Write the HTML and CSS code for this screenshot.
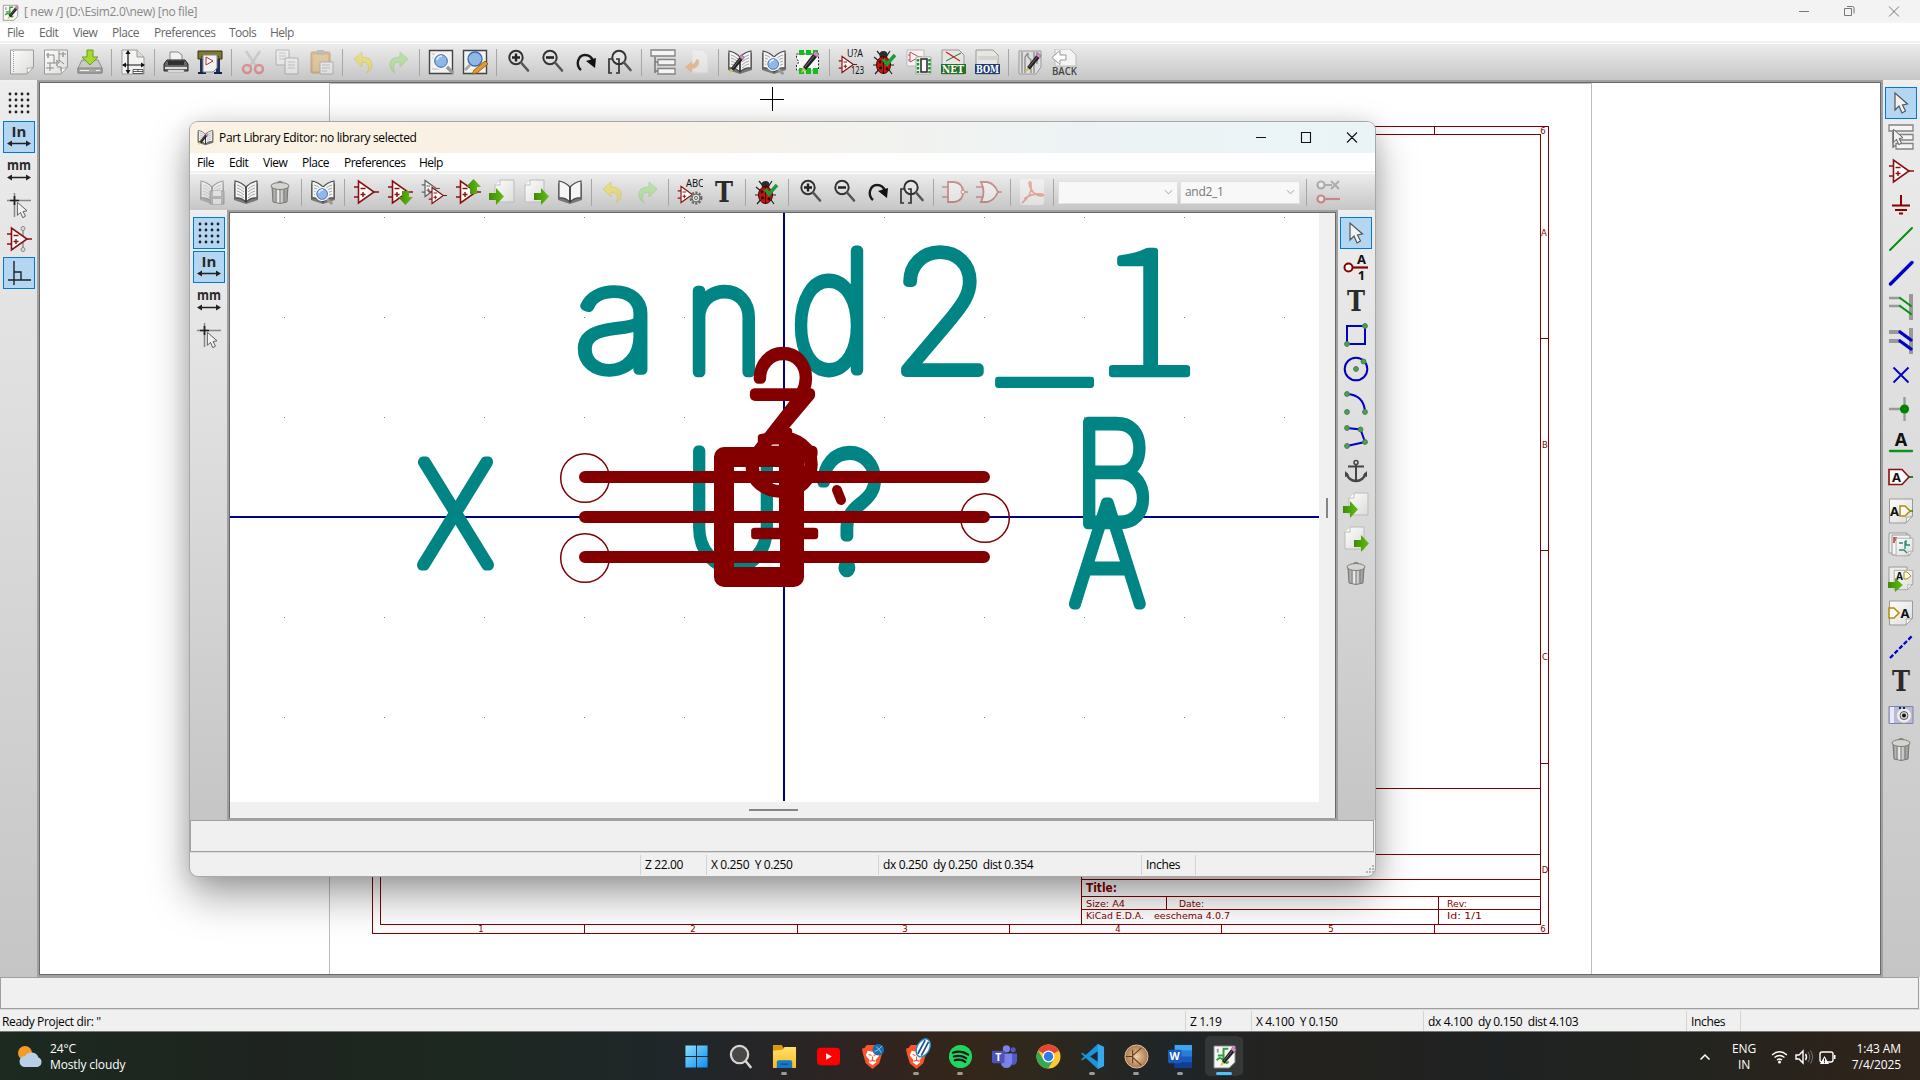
FILE: index.html
```html
<!DOCTYPE html>
<html lang="en">
<head>
<meta charset="utf-8">
<title>[ new /] (D:\Esim2.0\new) [no file]</title>
<link rel="stylesheet" href="styles.css">
</head>
<body>
<svg class="defs" width="0" height="0">
  <defs>
    <linearGradient id="paper" x1="0" y1="0" x2="1" y2="1"><stop offset="0" stop-color="#fdfdfd"/><stop offset="1" stop-color="#dcdcda"/></linearGradient>
    <linearGradient id="metal" x1="0" x2="1"><stop offset="0" stop-color="#8d8d88"/><stop offset=".4" stop-color="#eeeeec"/><stop offset="1" stop-color="#8d8d88"/></linearGradient>
    <linearGradient id="winblue" x1="0" y1="0" x2="1" y2="1"><stop offset="0" stop-color="#8be0fd"/><stop offset="1" stop-color="#0a8ef5"/></linearGradient>
    <linearGradient id="folder" x1="0" y1="0" x2="0" y2="1"><stop offset="0" stop-color="#ffdf71"/><stop offset="1" stop-color="#f9bb1c"/></linearGradient>
    <radialGradient id="bronze"><stop offset="0" stop-color="#f0cfa5"/><stop offset="1" stop-color="#a87850"/></radialGradient>
    <linearGradient id="green" x1="0" x2="1"><stop offset="0" stop-color="#3f8a06"/><stop offset="1" stop-color="#63bf12"/></linearGradient>
  </defs>
</svg>
<svg class="symbols">
  <symbol id="pencil" viewBox="0 0 26 26"><path d="M5 24l2-6 3 3z" fill="#d8c24a"/><path d="M7 18L17 5l4 3-11 13z" fill="#222"/><path d="M9 18L18 7" stroke="#777"/><path d="M17 5l2-3 4 3-2 3z" fill="#d58ac6" stroke="#86507b" stroke-width=".6"/></symbol>
  <symbol id="lens" viewBox="0 0 26 26"><path d="M17 18l6 6" stroke="#999" stroke-width="3.4" stroke-linecap="round"/><circle cx="12" cy="13" r="7.5" fill="#8fb8e6" stroke="#f6f6f6" stroke-width="2"/><circle cx="12" cy="13" r="6.3" fill="none" stroke="#3e6ca8"/><path d="M8 12q1-4 5-4" stroke="#e3f0ff" stroke-width="1.6" fill="none"/></symbol>
  <symbol id="page" viewBox="0 0 26 26"><path d="M1.500 1h23v17l-6.500 7h-16.500z" fill="url(#paper)" stroke="#9a9a98"/><path d="M18 25q1-4 0-6 3 1 6.500-1z" fill="#fff" stroke="#9a9a98" stroke-width=".8"/></symbol>
  <symbol id="new" viewBox="0 0 26 26"><use href="#page"/><path d="M4.500 2v22" stroke="#999" stroke-dasharray="1 1"/></symbol>
  <symbol id="open" viewBox="0 0 26 26"><use href="#page"/><path d="M3 6h8v8H4M11 14h5V5h7M16 5v-3M7 14v8M3 19h8M16 11l5 4M14 18h4v4" fill="none" stroke="#8a8a8a"/><path d="M14 11v6M5 4v5M20 3v5" stroke="#aaa" stroke-width="2"/></symbol>
  <symbol id="save" viewBox="0 0 26 26"><path d="M5 11h16l4 8v5H1v-5z" fill="#c9c9c7" stroke="#8b8b89"/><path d="M1 19h24v5H1z" fill="#a8a8a6" stroke="#80807e"/><path d="M3 21.500h9M19 21.500h4" stroke="#eee"/><path d="M10 1h6v7h5l-8 8-8-8h5z" fill="#a6d932" stroke="#6da010"/></symbol>
  <symbol id="pagesize" viewBox="0 0 26 26"><path d="M2 1h15l7 7v17H2z" fill="#f3f3f2" stroke="#999"/><path d="M17 1v7h7" fill="#ddd" stroke="#999"/><path d="M8 3v21M3 16h21" stroke="#111" stroke-width="1.200"/><path d="M8 1l-2.500 4h5zM8 25l-2.500-4h5zM2 16l4-2.500v5zM25 16l-4-2.500v5z" fill="#111"/><path d="M13 20.500h10v4H13zM13 22.500h10M18 20.500v2" fill="#fff" stroke="#333" stroke-width=".8"/></symbol>
  <symbol id="print" viewBox="0 0 26 26"><path d="M7 12V3h8l4 3v6z" fill="#f2f2f2" stroke="#888"/><path d="M4 11h18l3 4v7H1v-7z" fill="#666" stroke="#222"/><path d="M5 12h16v4H5z" fill="#303030"/><path d="M2 18h22v2H2z" fill="#ddd"/><path d="M5 21h16v2H5z" fill="#f6f6f6" stroke="#999" stroke-width=".6"/></symbol>
  <symbol id="plot" viewBox="0 0 26 26"><path d="M3 10h4v15H3zM19 10h4v15h-4z" fill="#20335f"/><path d="M1 24h8M17 24h8" stroke="#14224a" stroke-width="2"/><path d="M1 2h24v8h-4v-3H5v3H1z" fill="#7d7b31" stroke="#33310e"/><path d="M6 6h14v13l-4 4H6z" fill="#f2f2f2" stroke="#888"/><path d="M9 8v8l7-4z" fill="#fff" stroke="#a33"/></symbol>
  <symbol id="cut" viewBox="0 0 26 26"><path d="M6 2l10 15M20 2L10 17" stroke="#aaa" stroke-width="2.400"/><circle cx="7" cy="20" r="4" fill="none" stroke="#d33" stroke-width="2.500"/><circle cx="19" cy="20" r="4" fill="none" stroke="#d33" stroke-width="2.500"/></symbol>
  <symbol id="copy" viewBox="0 0 26 26"><path d="M2 1h13v15H2z" fill="#fafafa" stroke="#777"/><path d="M5 4h7M5 7h7M5 10h7" stroke="#999"/><path d="M11 9h13v16H11z" fill="#fafafa" stroke="#777"/><path d="M14 13h7M14 16h7M14 19h7" stroke="#999"/></symbol>
  <symbol id="paste" viewBox="0 0 26 26"><rect x="3" y="3" width="19" height="21" rx="1.500" fill="#d08a28" stroke="#8f5a10"/><path d="M5 6h15v16H5z" fill="#e7a94e"/><path d="M9 1h7v5H9z" fill="#888"/><path d="M12 13h13v12H12z" fill="#fafafa" stroke="#777"/><path d="M14 16h8M14 19h8M14 22h5" stroke="#999"/></symbol>
  <symbol id="undo" viewBox="0 0 26 26"><path d="M11 3v5q11 0 10 9-1 5-5 7 3-5 1-8-1-3-6-3v5L3 10z" fill="#f5d90a" stroke="#d5a900" stroke-width=".8"/></symbol>
  <symbol id="redo" viewBox="0 0 26 26"><path d="M15 3v5Q4 8 5 17q1 5 5 7-3-5-1-8 1-3 6-3v5l8-8z" fill="#8be060" stroke="#62b94a" stroke-width=".8"/></symbol>
  <symbol id="find" viewBox="0 0 26 26"><path d="M1.500 1.500h23v23h-23z" fill="#f2f2f2" stroke="#444" stroke-width="1.400"/><path d="M4 5h3M4 9h3M4 20h8" stroke="#bbb"/><use href="#lens" x="1" y="-1"/></symbol>
  <symbol id="replace" viewBox="0 0 26 26"><path d="M1.500 1.500h23v23h-23z" fill="#f2f2f2" stroke="#444" stroke-width="1.400"/><circle cx="13" cy="10" r="7" fill="#8fb8e6" stroke="#3e6ca8" stroke-width="1.300"/><path d="M8 16l-5 5" stroke="#aaa" stroke-width="3"/><path d="M10 25l2-4L23 12l3 3-11 9z" fill="#e29a2c" stroke="#8d5410" stroke-width=".8"/></symbol>
  <symbol id="glass" viewBox="0 0 26 26"><circle cx="11" cy="8.500" r="6.700" fill="#e4e4e4" fill-opacity=".5" stroke="#333" stroke-width="2"/><path d="M16 13.500l7 8" stroke="#555" stroke-width="2.600" stroke-linecap="round"/></symbol>
  <symbol id="zin" viewBox="0 0 26 26"><use href="#glass"/><path d="M7 8.500h8M11 4.500v8" stroke="#222" stroke-width="2.400"/></symbol>
  <symbol id="zout" viewBox="0 0 26 26"><use href="#glass"/><path d="M7 8.500h8" stroke="#222" stroke-width="2.600"/></symbol>
  <symbol id="redraw" viewBox="0 0 26 26"><path d="M8 21C2 16 5 6 12 6q6 0 8 6" fill="none" stroke="#1a1a1a" stroke-width="2.400"/><path d="M13 12l10-3-1 10z" fill="#111"/></symbol>
  <symbol id="zfit" viewBox="0 0 26 26"><circle cx="12" cy="8.500" r="6.700" fill="#ececec" fill-opacity=".5" stroke="#333" stroke-width="2"/><path d="M17 13.500l6.500 7.500" stroke="#555" stroke-width="2.600" stroke-linecap="round"/><path d="M5 10H2v14h3M9 10h3v14H9" fill="none" stroke="#333" stroke-width="1.700"/></symbol>
  <symbol id="tree" viewBox="0 0 26 26"><path d="M5 8v16M5 13h5M5 22h5" stroke="#777" stroke-width="1.500" fill="none"/><path d="M1 1h24v6H1zM8 10.500h17v5.500H8zM8 19.500h17v5.500H8z" fill="#f4f4f4" stroke="#838383" stroke-width="1.300"/></symbol>
  <symbol id="leave" viewBox="0 0 26 26"><path d="M8 1h11l5 5v18H8z" fill="#fafafa" stroke="#ddd"/><path d="M15 11q1 8-7 9v4l-7-6 7-6v3q4-1 4-5z" fill="#f0913c"/></symbol>
  <symbol id="book" viewBox="0 0 26 26"><path d="M1 4v17l12 4 12-4V4l-12 5z" fill="#777"/><path d="M2 2q6 1 11 6v15Q8 18 2 19zM24 2q-6 1-11 6v15q5-5 11-4z" fill="#f5f5f5" stroke="#4b4b4b" stroke-width="1.100"/><path d="M13 8v15" stroke="#333" stroke-width="1.500"/></symbol>
  <symbol id="booklines" viewBox="0 0 26 26"><use href="#book"/><path d="M4 6q4 1 7 4M4 9q4 1 7 4M4 12q4 1 7 4M4 15q4 1 7 4M22 6q-4 1-7 4M22 9q-4 1-7 4M22 12q-4 1-7 4M22 15q-4 1-7 4" fill="none" stroke="#999" stroke-width=".9"/></symbol>
  <symbol id="libedit" viewBox="0 0 26 26"><use href="#booklines"/><use href="#pencil" x="-2" y="4" width="22" height="22"/></symbol>
  <symbol id="libview" viewBox="0 0 26 26"><use href="#booklines"/><use href="#lens" x="2" y="4" width="22" height="22"/></symbol>
  <symbol id="fpedit" viewBox="0 0 26 26"><path d="M1.500 5h22v16h-22v-5q4-3 0-6z" fill="#f8f8f8" stroke="#222" stroke-dasharray="2 1.500"/><path d="M4 1h5v5H4zM11 1h5v5h-5zM18 1h5v5h-5zM4 19h5v6H4zM11 19h5v6h-5zM18 19h5v6h-5z" fill="#0fc01c"/><use href="#pencil" x="1"/></symbol>
  <symbol id="amp" viewBox="0 0 26 26"><path d="M1 8h5M1 18h5M20 13h6" stroke="#8a1010" stroke-width="1.700"/><path d="M5.500 2v22L21 13z" fill="#fff" stroke="#8a1010" stroke-width="1.600"/><path d="M7.500 9.500h5M7.500 15.500h5M10 13v5" stroke="#8a1010" stroke-width="1.400"/></symbol>
  <symbol id="annotate" viewBox="0 0 26 26"><use href="#amp" x="0" y="6" width="19" height="19"/><text class="g" x="9" y="8" font-size="10" textLength="16" lengthAdjust="spacingAndGlyphs">U?A</text><text class="g" x="13" y="25" font-size="10" textLength="13" lengthAdjust="spacingAndGlyphs">123</text></symbol>
  <symbol id="bug" viewBox="0 0 26 26"><path d="M5 2l5 6M18 2l-4 6M2 8l6 5M1 16h7M3 25l6-7M22 16h-5M20 25l-5-7" stroke="#222" stroke-width="1.200"/><circle cx="11.500" cy="6" r="4" fill="#2b2b2b"/><ellipse cx="11.500" cy="16" rx="7" ry="8.500" fill="#c9140c" stroke="#400"/><path d="M11.500 7v18" stroke="#300"/><circle cx="8" cy="13" r="1.400"/><circle cx="8.500" cy="19" r="1.400"/><circle cx="15" cy="20" r="1.400"/><circle cx="15" cy="13" r="1.300"/><path d="M11 10l4 5 8-9" fill="none" stroke="#1f9b36" stroke-width="3.400"/></symbol>
  <symbol id="cvpcb" viewBox="0 0 26 26"><path d="M1 1h17v16H1z" fill="#f4f4f4" stroke="#bbb"/><path d="M4 3v10l9-5z" fill="#fff" stroke="#c44"/><path d="M2 6h2M2 11h2M13 8h3" stroke="#c44"/><path d="M10 8h15v17H10z" fill="#fafafa" stroke="#aaa"/><path d="M15 10h6v13h-6z" fill="none" stroke="#222" stroke-width="1.500"/><path d="M12 10v14M23.500 10v14" stroke="#109a20" stroke-width="2.500" stroke-dasharray="2.500 1.500"/></symbol>
  <symbol id="net" viewBox="0 0 26 26"><path d="M2 1h17l5 5v19H2z" fill="#e5e5e3" stroke="#999"/><path d="M6 12L21 4" stroke="#1a7a2a"/><path d="M6 3l14 9" stroke="#c22" stroke-width="1.300"/><path d="M1 15h25v10H1z" fill="#267026"/><text x="2" y="24" class="serifb" textLength="22" lengthAdjust="spacingAndGlyphs">NET</text></symbol>
  <symbol id="bom" viewBox="0 0 26 26"><path d="M2 1h17l5 5v19H2z" fill="#e5e5e3" stroke="#999"/><path d="M4 7h20v4H4z" fill="#d2d5cc"/><path d="M1 15h25v10H1z" fill="#1f3c77"/><text x="2" y="24" class="serifb" textLength="23" lengthAdjust="spacingAndGlyphs">BOM</text></symbol>
  <symbol id="pcb" viewBox="0 0 26 26"><path d="M2 2h22v16l-5 7H2z" fill="#dedede" stroke="#999"/><path d="M5 3v21M8 8v16M11 4v4l3 3v13M17 3v21M8 8l3-4M20 3v12" fill="none" stroke="#8a8a8a" stroke-width="1.300"/><use href="#pencil" x="4" y="2" width="23" height="23"/></symbol>
  <symbol id="back" viewBox="0 0 26 26"><path d="M4 0h15l6 6v11H4z" fill="#f4f4f4" stroke="#bbb"/><path d="M1 8.500l8-7v4.500h6v5H9v4.500z" fill="#fff" stroke="#999"/><text class="gm" x="1" y="26" font-size="10.500" textLength="25" lengthAdjust="spacingAndGlyphs">BACK</text></symbol>
  <symbol id="grid" viewBox="0 0 26 26"><path d="M4 4h21M4 10h21M4 16h21M4 22h21" stroke="#222" stroke-width="2.800" stroke-linecap="round" stroke-dasharray="0 6"/></symbol>
  <symbol id="inch" viewBox="0 0 26 26"><text class="gb" x="13" y="13" font-size="15" text-anchor="middle">In</text><path d="M4 19.500h18" stroke="#222" stroke-width="1.500"/><path d="M1 19.500l5-3v6zM25 19.500l-5-3v6z" fill="#222"/></symbol>
  <symbol id="mm" viewBox="0 0 26 26"><text class="gb" x="1" y="12" font-size="15" textLength="24" lengthAdjust="spacingAndGlyphs">mm</text><path d="M4 19.500h18" stroke="#222" stroke-width="1.500"/><path d="M1 19.500l5-3v6zM25 19.500l-5-3v6z" fill="#222"/></symbol>
  <symbol id="arrow" viewBox="0 0 26 26"><path d="M7 3v17l4-4 3 7 3.500-2-3-6 5-1z" fill="#f2f2f2" stroke="#555" stroke-width="1.200"/></symbol>
  <symbol id="curs" viewBox="0 0 26 26"><path d="M8.500 1v24M1 8.500h24" stroke="#888" stroke-width="1.500"/><path d="M8.500 4v9M4 8.500h9" stroke="#222" stroke-width="1.700"/><use href="#arrow" x="6" y="8" width="20" height="20"/></symbol>
  <symbol id="hidden" viewBox="0 0 26 26"><path d="M17 3v20" stroke="#888" stroke-width="1.400"/><circle cx="17" cy="2.500" r="2" fill="#ddd" stroke="#888"/><circle cx="17" cy="23.500" r="2" fill="#ddd" stroke="#888"/><use href="#amp"/></symbol>
  <symbol id="ortho" viewBox="0 0 26 26"><path d="M8 1v24M2 20h23M8 12h7v8" fill="none" stroke="#222" stroke-width="1.400"/></symbol>
  <symbol id="treesel" viewBox="0 0 26 26"><use href="#tree"/><use href="#arrow" x="-1" y="3" width="22" height="20"/></symbol>
  <symbol id="gnd" viewBox="0 0 26 26"><path d="M13 3v10M4 13.500h18M7 18h12M11 21.500h4" stroke="#800" stroke-width="2"/></symbol>
  <symbol id="wire" viewBox="0 0 26 26"><path d="M2 24L24 2" stroke="#00900c" stroke-width="2" stroke-linecap="round"/></symbol>
  <symbol id="bus" viewBox="0 0 26 26"><path d="M2.500 24L24 2.500" stroke="#0000c8" stroke-width="3.400" stroke-linecap="round"/></symbol>
  <symbol id="w2b" viewBox="0 0 26 26"><path d="M23 0v26" stroke="#999" stroke-width="4"/><path d="M1 4h12M1 12h12" stroke="#999" stroke-width="2.400"/><path d="M12 4l11 8M12 12l11 8" stroke="#00900c" stroke-width="2" stroke-linecap="round"/></symbol>
  <symbol id="b2b" viewBox="0 0 26 26"><path d="M23 0v26" stroke="#999" stroke-width="4"/><path d="M1 4h12M1 13h12" stroke="#999" stroke-width="4"/><path d="M12 4l11 8M12 13l11 8" stroke="#0000c8" stroke-width="3.400" stroke-linecap="round"/></symbol>
  <symbol id="nc" viewBox="0 0 26 26"><path d="M5.500 5.500l15 15M20.500 5.500l-15 15" stroke="#0000c8" stroke-width="1.800"/></symbol>
  <symbol id="junction" viewBox="0 0 26 26"><path d="M1 13h15M16.500 1v24" stroke="#999" stroke-width="2.300"/><circle cx="16.500" cy="13" r="4.600" fill="#008400"/></symbol>
  <symbol id="label" viewBox="0 0 26 26"><text class="g" x="13" y="15.500" font-size="18" text-anchor="middle">A</text><path d="M2 21h22" stroke="#0f9318" stroke-width="2.300" stroke-linecap="round"/></symbol>
  <symbol id="glabel" viewBox="0 0 26 26"><path d="M20 13h5" stroke="#0f9318" stroke-width="2"/><path d="M1 5.500h13l7 7.500-7 7.500H1z" fill="#fff" stroke="#8a1010" stroke-width="1.600"/><text class="g" x="8.500" y="18" font-size="13" text-anchor="middle">A</text></symbol>
  <symbol id="hlabel" viewBox="0 0 26 26"><use href="#page"/><path d="M21 13h4" stroke="#0f9318" stroke-width="1.500"/><path d="M12 8h5l5 5-5 5h-5z" fill="#fff" stroke="#b58a00" stroke-width="1.500"/><text class="g" x="6.500" y="18" font-size="13" text-anchor="middle">A</text></symbol>
  <symbol id="sheet" viewBox="0 0 26 26"><path d="M1 1h18v20H1z" fill="#eee" stroke="#999"/><path d="M4 3h18v20H4z" fill="#f4f4f4" stroke="#999"/><path d="M6 5v6M8 5v4" stroke="#b33" stroke-width="1.500"/><use href="#page" x="7" y="5" width="19" height="20"/><path d="M11 11h4M18 8v5l4 0M11 18h5l3 3M17 9v8" stroke="#2a8a7a" fill="none" stroke-width="1.300"/></symbol>
  <symbol id="imp" viewBox="0 0 26 26"><path d="M1 1h18v20H1z" fill="#eee" stroke="#999"/><use href="#page" x="5" y="3" width="21" height="22"/><text class="g" x="8" y="14" font-size="10">A</text><path d="M16 6h3l4 4-4 3h-3z" fill="#fff" stroke="#b58a00"/><path d="M0 16h7v-4l8 7-8 7v-4H0z" fill="url(#green)"/></symbol>
  <symbol id="spin" viewBox="0 0 26 26"><use href="#page"/><path d="M1 8h5l5 5-5 5H1z" fill="#fff" stroke="#b58a00" stroke-width="1.500"/><text class="g" x="17" y="18" font-size="13" text-anchor="middle">A</text></symbol>
  <symbol id="dash" viewBox="0 0 26 26"><path d="M2 24L24 2" stroke="#0000d8" stroke-width="2.300" stroke-dasharray="4.500 2"/></symbol>
  <symbol id="tee" viewBox="0 0 26 26"><text x="4" y="22.500" class="tee" textLength="18" lengthAdjust="spacingAndGlyphs">T</text></symbol>
  <symbol id="cam" viewBox="0 0 26 26"><path d="M1 4.500h24v17H1z" fill="#b7b9dd" stroke="#7f82ab"/><path d="M2 5h4v16H2z" fill="#e9eaf8"/><circle cx="16" cy="13.500" r="7.500" fill="#eee" stroke="#bbb"/><circle cx="16" cy="13.500" r="4" fill="#ddd" stroke="#555"/><circle cx="16" cy="13.500" r="2" fill="#111"/><path d="M11 6h2M15 6h2" stroke="#035" stroke-width="2"/></symbol>
  <symbol id="trash" viewBox="0 0 26 26"><path d="M5 8h16l-1 15q-7 3-14 0z" fill="url(#metal)" stroke="#777"/><path d="M9 9v14M13 9v15M17 9v14" stroke="#666" stroke-width=".9"/><ellipse cx="13" cy="7" rx="9" ry="3.500" fill="#d5d5d0" stroke="#7c7c78"/><path d="M10 4q3-3 6 0" fill="none" stroke="#888" stroke-width="1.500"/></symbol>
  <symbol id="pin" viewBox="0 0 26 26"><path d="M9 13.500h16" stroke="#800" stroke-width="2.200"/><circle cx="5.500" cy="13.500" r="4" fill="#fff" stroke="#800" stroke-width="2"/><text class="g" x="18.500" y="10" font-size="13" text-anchor="middle">A</text><text class="g" x="18.500" y="25.500" font-size="13" text-anchor="middle">1</text></symbol>
  <symbol id="rect" viewBox="0 0 26 26"><path d="M4 4h18v18H4z" fill="none" stroke="#0000c8" stroke-width="2"/><g fill="#2bb73a" stroke="#666"><circle cx="22" cy="4" r="2.400"/><circle cx="4" cy="22" r="2.400"/></g></symbol>
  <symbol id="circ" viewBox="0 0 26 26"><circle cx="13" cy="13" r="11.300" fill="none" stroke="#0000b8" stroke-width="2"/><g fill="#2bb73a" stroke="#666"><circle cx="13" cy="13" r="2.400"/><circle cx="20.500" cy="5.500" r="2.400"/></g></symbol>
  <symbol id="arc" viewBox="0 0 26 26"><path d="M4 4q17 1 18 18" fill="none" stroke="#0000c8" stroke-width="2"/><g fill="#2bb73a" stroke="#666"><circle cx="4" cy="4" r="2.400"/><circle cx="22" cy="22" r="2.400"/><circle cx="4" cy="22" r="2.400"/></g></symbol>
  <symbol id="poly" viewBox="0 0 26 26"><path d="M4 4l13.500 1.500L22 18 4 22" fill="none" stroke="#0000c8" stroke-width="2"/><g fill="#2bb73a" stroke="#666"><circle cx="4" cy="4" r="2.400"/><circle cx="17.500" cy="5.500" r="2.400"/><circle cx="22" cy="18" r="2.400"/><circle cx="4" cy="22" r="2.400"/></g></symbol>
  <symbol id="anchor" viewBox="0 0 26 26"><circle cx="13" cy="4.500" r="2" fill="none" stroke="#444" stroke-width="1.500"/><path d="M13 7v16M5 8.500h16" stroke="#444" stroke-width="2"/><path d="M3 15q3 8 10 8t10-8" fill="none" stroke="#444" stroke-width="2.400"/><path d="M2 13v6l4-2zM24 13v6l-4-2z" fill="#444"/></symbol>
  <symbol id="doc" viewBox="0 0 26 26"><path d="M5 6l5-5h14v22H5z" fill="url(#paper)" stroke="#bbb"/><path d="M5 6h5V1" fill="#fff" stroke="#bbb"/></symbol>
  <symbol id="in" viewBox="0 0 26 26"><use href="#doc" x="1"/><path d="M0 14h7v-5l8 8.500L7 26v-5H0z" fill="url(#green)"/></symbol>
  <symbol id="out" viewBox="0 0 26 26"><use href="#doc" x="-3"/><path d="M11 14h7v-5l8 8.500L18 26v-5h-7z" fill="url(#green)"/></symbol>
  <symbol id="libsave" viewBox="0 0 26 26"><use href="#booklines"/><path d="M11 12h14v13H11z" fill="#888" stroke="#555"/><path d="M14 12h8v5h-8zM14 20h8v5h-8z" fill="#eee"/></symbol>
  <symbol id="ampdn" viewBox="0 0 26 26"><use href="#amp"/><path d="M15 12h7v6h4l-7.500 8L11 18h4z" fill="url(#green)"/></symbol>
  <symbol id="ampup" viewBox="0 0 26 26"><use href="#amp"/><path d="M15 15h7V8h4L18.500 0 11 8h4z" fill="url(#green)"/></symbol>
  <symbol id="ampcp" viewBox="0 0 26 26"><g class="grey"><use href="#amp" width="19" height="19"/></g><use href="#amp" x="7" y="7" width="19" height="19"/></symbol>
  <symbol id="partprop" viewBox="0 0 26 26"><use href="#amp" y="6" width="19" height="19"/><text class="g" x="9" y="8" font-size="10.500" textLength="18" lengthAdjust="spacingAndGlyphs">ABC</text><circle cx="19" cy="19" r="5" fill="#ddd" stroke="#666" stroke-width="3" stroke-dasharray="2 1.200"/><circle cx="19" cy="19" r="4" fill="#ddd" stroke="#666"/><circle cx="19" cy="19" r="1.500" fill="#fff" stroke="#666"/></symbol>
  <symbol id="gate1" viewBox="0 0 26 26"><path d="M0 8h6M0 18h6M22 13h4" stroke="#a22" stroke-width="1.500"/><path d="M6 3h6q9 1 9 10t-9 10H6z" fill="#fff" stroke="#a22" stroke-width="1.800"/><circle cx="21" cy="13" r="2" fill="#fff" stroke="#a22"/></symbol>
  <symbol id="gate2" viewBox="0 0 26 26"><path d="M0 8h8M0 18h8M22 13h4" stroke="#a22" stroke-width="1.500"/><path d="M5 3h6q7 1 11 10-4 9-11 10H5q5-10 0-20z" fill="#fff" stroke="#a22" stroke-width="1.800"/></symbol>
  <symbol id="pdf" viewBox="0 0 26 26"><rect x="1" y="0" width="24" height="26" rx="3" fill="#fff"/><path d="M3 24Q14 16 12 4q-1-3-2 0 2 12 13 13 3-1 0-2-10-1-18 5" fill="none" stroke="#f0603c" stroke-width="1.600"/></symbol>
  <symbol id="pins" viewBox="0 0 26 26"><circle cx="6" cy="6" r="3.500" fill="#fff" stroke="#666" stroke-width="2.200"/><path d="M10 6h7M16 2l8 8M24 2l-8 8" stroke="#666" stroke-width="2"/><circle cx="6" cy="20" r="3.500" fill="#fff" stroke="#b22" stroke-width="2.200"/><path d="M10 20h15" stroke="#b22" stroke-width="2.200"/></symbol>
  <symbol id="app" viewBox="0 0 26 26"><path d="M2 2h22v17l-6 6H2z" fill="#f8f8f8" stroke="#777"/><path d="M6 12h6V5h5M12 12v8M5 17q3-5 7 0t5 1" fill="none" stroke="#2fa02f" stroke-width="2"/><path d="M6 5v4" stroke="#999" stroke-width="2"/><use href="#pencil" x="4" y="1" width="24" height="24"/></symbol>
  <symbol id="brave" viewBox="0 0 26 26"><path d="M7 1h12l2 3 3 1-1 5-3 10-7 6-7-6L3 10 2 5l3-1z" fill="#fb542b"/><path d="M8 7l5 1 5-1 2 5-4 5 1 2-4 3-4-3 1-2-4-5z" fill="#fff"/><path d="M9 11l3 1M17 11l-3 1M13 13v4M10 18l3-1 3 1" stroke="#fb542b" stroke-width="1.200" fill="none"/></symbol>
</svg>

<main class="desktop">
  <section class="window">
    <header class="title"><svg class="appicon"><use href="#app"/></svg><span>[ new /] (D:\Esim2.0\new) [no file]</span>
      <svg class="caption" viewBox="0 0 120 20"><path d="M4 10.500h10M94 5.500l10 10M104 5.500l-10 10M49.500 7.500h7v7h-7zM52 5.500h5.500q1.500 0 1.500 1.500v5.500" fill="none" stroke="#777"/></svg></header>
    <nav class="menu dim"><span class="w32">File</span><span class="w34">Edit</span><span class="w39">View</span><span class="w42">Place</span><span class="w75">Preferences</span><span class="w41">Tools</span><span>Help</span></nav>
    <div class="toolbar">
      <svg><use href="#new"/></svg><svg><use href="#open"/></svg><svg><use href="#save"/></svg><i></i>
      <svg><use href="#pagesize"/></svg><i></i><svg><use href="#print"/></svg><svg><use href="#plot"/></svg><i></i>
      <svg class="off"><use href="#cut"/></svg><svg class="off"><use href="#copy"/></svg><svg class="off"><use href="#paste"/></svg><i></i>
      <svg class="off"><use href="#undo"/></svg><svg class="off"><use href="#redo"/></svg><i></i>
      <svg><use href="#find"/></svg><svg><use href="#replace"/></svg><i></i>
      <svg><use href="#zin"/></svg><svg><use href="#zout"/></svg><svg><use href="#redraw"/></svg><svg><use href="#zfit"/></svg><i></i>
      <svg><use href="#tree"/></svg><svg class="off"><use href="#leave"/></svg><i></i>
      <svg><use href="#libedit"/></svg><svg><use href="#libview"/></svg><svg><use href="#fpedit"/></svg><i></i>
      <svg><use href="#annotate"/></svg><svg><use href="#bug"/></svg><svg><use href="#cvpcb"/></svg><svg><use href="#net"/></svg><svg><use href="#bom"/></svg><i></i>
      <svg><use href="#pcb"/></svg><svg><use href="#back"/></svg>
    </div>
    <div class="work">
      <aside class="side left"><b><svg><use href="#grid"/></svg></b><b class="on"><svg><use href="#inch"/></svg></b><b><svg><use href="#mm"/></svg></b><b><svg><use href="#curs"/></svg></b><b><svg><use href="#hidden"/></svg></b><b class="on"><svg><use href="#ortho"/></svg></b></aside>
      <div class="canvas">
        <svg class="sheet" viewBox="40 83 1840 891" width="1840" height="891">
          <path d="M329.500 975V83.500H1591.500V975" fill="none" stroke="#bdbdbd"/>
          <g fill="none" stroke="#840000" stroke-width="1" shape-rendering="crispEdges">
            <path d="M372.500 126.500H1548.500V933.500H372.500zM380.500 134.500H1540.500V924.500H380.500z"/>
            <path d="M584.500 924v9M797.500 924v9M1009.500 924v9M1221.500 924v9M1434.500 924v9M1434.500 126v8M1540 338.500h8M1540 550.500h8M1540 763.500h8"/>
            <path d="M1081.500 924V788.500H1540M1082 854.500h458M1082 879.500h458M1082 896.500h458M1082 909.500h458M1166.500 896v13M1438.500 896v28"/>
          </g>
          <g class="plot">
            <text x="481" y="932">1</text><text x="693" y="932">2</text><text x="905" y="932">3</text><text x="1118" y="932">4</text><text x="1331" y="932">5</text><text x="1543" y="932">6</text><text x="1543" y="134">6</text>
            <text x="1544" y="236">A</text><text x="1545" y="448">B</text><text x="1545" y="660">C</text><text x="1545" y="873">D</text>
          </g>
          <g class="block">
            <text x="1086" y="892" class="big" textLength="31" lengthAdjust="spacingAndGlyphs">Title:</text>
            <text x="1086" y="907" textLength="39" lengthAdjust="spacingAndGlyphs">Size: A4</text><text x="1179" y="907" textLength="25" lengthAdjust="spacingAndGlyphs">Date:</text><text x="1447" y="907" textLength="20" lengthAdjust="spacingAndGlyphs">Rev:</text>
            <text x="1086" y="919" textLength="58" lengthAdjust="spacingAndGlyphs">KiCad E.D.A.</text><text x="1154" y="919" textLength="76" lengthAdjust="spacingAndGlyphs">eeschema 4.0.7</text><text x="1447" y="919" textLength="35" lengthAdjust="spacingAndGlyphs">Id: 1/1</text>
          </g>
          <path d="M1087 876.500h2M1093 876.500h1M1096 876.500h4M1118 876.500h4M1124 876.500h2M1130 876.500h5M1138 876.500h1M1144 876.500h2" stroke="#840000" stroke-opacity=".7"/>
          <path d="M760 99.500h24M772.500 87v24" stroke="#000" shape-rendering="crispEdges"/>
        </svg>
      </div>
      <aside class="side right"><b class="on"><svg><use href="#arrow"/></svg></b><b><svg><use href="#treesel"/></svg></b><b><svg><use href="#amp"/></svg></b><b><svg><use href="#gnd"/></svg></b><b><svg><use href="#wire"/></svg></b><b><svg><use href="#bus"/></svg></b><b><svg><use href="#w2b"/></svg></b><b><svg><use href="#b2b"/></svg></b><b><svg><use href="#nc"/></svg></b><b><svg><use href="#junction"/></svg></b><b><svg><use href="#label"/></svg></b><b><svg><use href="#glabel"/></svg></b><b><svg><use href="#hlabel"/></svg></b><b><svg><use href="#sheet"/></svg></b><b><svg><use href="#imp"/></svg></b><b><svg><use href="#spin"/></svg></b><b><svg><use href="#dash"/></svg></b><b><svg><use href="#tee"/></svg></b><b><svg><use href="#cam"/></svg></b><b><svg><use href="#trash"/></svg></b></aside>
    </div>
    <div class="message"></div>
    <footer class="status"><span class="grow">Ready Project dir: ''</span><span class="c66">Z 1.19</span><span class="c172">X 4.100&nbsp; Y 0.150</span><span class="c263">dx 4.100&nbsp; dy 0.150&nbsp; dist 4.103</span><span class="c54">Inches</span><span class="last"></span></footer>
  </section>

  <section class="dialog">
    <header class="title"><svg class="appicon"><use href="#libedit"/></svg><span>Part Library Editor: no library selected</span>
      <svg class="caption" viewBox="0 0 120 20"><path d="M5 9.500h10M96 4.500l10 10M106 4.500l-10 10M50.500 4.500h9v10h-9z" fill="none" stroke="#111" stroke-width="1.100"/></svg></header>
    <nav class="menu"><span class="w32">File</span><span class="w34">Edit</span><span class="w39">View</span><span class="w42">Place</span><span class="w75">Preferences</span><span>Help</span></nav>
    <div class="toolbar">
      <svg class="off"><use href="#libsave"/></svg><svg><use href="#booklines"/></svg><svg><use href="#trash"/></svg><i></i>
      <svg><use href="#libview"/></svg><i></i>
      <svg><use href="#amp"/></svg><svg><use href="#ampdn"/></svg><svg><use href="#ampcp"/></svg><svg><use href="#ampup"/></svg><svg><use href="#in"/></svg><svg><use href="#out"/></svg><svg><use href="#book"/></svg><i></i>
      <svg class="off"><use href="#undo"/></svg><svg class="off"><use href="#redo"/></svg><i></i>
      <svg><use href="#partprop"/></svg><svg><use href="#tee"/></svg><i></i><svg><use href="#bug"/></svg><i></i>
      <svg><use href="#zin"/></svg><svg><use href="#zout"/></svg><svg><use href="#redraw"/></svg><svg><use href="#zfit"/></svg><i></i>
      <svg class="off"><use href="#gate1"/></svg><svg class="off"><use href="#gate2"/></svg><i></i><svg class="off"><use href="#pdf"/></svg><i></i>
      <span class="combo"><svg viewBox="0 0 10 6"><path d="M1 1l4 4 4-4" fill="none" stroke="#999"/></svg></span><span class="combo">and2_1<svg viewBox="0 0 10 6"><path d="M1 1l4 4 4-4" fill="none" stroke="#999"/></svg></span><i></i>
      <svg class="off"><use href="#pins"/></svg>
    </div>
    <div class="work">
      <aside class="side left"><b class="on"><svg><use href="#grid"/></svg></b><b class="on"><svg><use href="#inch"/></svg></b><b><svg><use href="#mm"/></svg></b><b><svg><use href="#curs"/></svg></b></aside>
      <div class="canvas scrolls">
        <svg class="sheet" viewBox="230 213 1089 589" width="1089" height="589">
          <defs><pattern id="dots" x="284" y="217" width="100" height="100" patternUnits="userSpaceOnUse"><rect width="1" height="1" fill="#848484"/></pattern></defs>
          <rect x="230" y="213" width="1089" height="589" fill="url(#dots)"/>
          <path d="M230 517h1089M784 213v588" stroke="#000084" stroke-width="2" shape-rendering="crispEdges"/>
          <g class="pen teal">
            <text data-box="578 285 648 377">a</text><text data-box="692 285 756 377">n</text><text data-box="794 246 864 377">d</text><text data-box="900 245 984 377">2</text><text data-box="995 377 1098 389">_</text><text data-box="1109 246 1190 377" class="slab">1</text>
            <text data-box="692 446 774 574">U</text><text data-box="817 445 882 577">?</text>
            <text data-box="416 457 495 570">X</text><text data-box="1082 417 1150 529">B</text><text data-box="1068 498 1147 609">A</text>
          </g>
          <g class="pen maroon">
            <text data-box="751 347 818 459">2</text><text data-box="745 387 818 499">3</text><text data-box="751 427 818 539" class="slab">1</text>
          </g>
          <g fill="none" stroke="#840000" stroke-linecap="round">
            <rect x="724" y="457" width="70" height="120" stroke-width="20" stroke-linejoin="round"/>
            <path d="M585 477H984M585 517H984M585 557H984" stroke-width="12"/>
            <path d="M837 490l4 10" stroke-width="10"/>
            <path d="M788 460v120" stroke-width="16" stroke-linecap="butt"/>
            <g stroke-width="1.500"><circle cx="585" cy="478" r="24.300"/><circle cx="585" cy="558" r="24.300"/><circle cx="985" cy="518" r="24.300"/></g>
          </g>
        </svg>
        <div class="vbar"><u></u></div><div class="hbar"><u></u></div>
      </div>
      <aside class="side right"><b class="on"><svg><use href="#arrow"/></svg></b><b><svg><use href="#pin"/></svg></b><b><svg><use href="#tee"/></svg></b><b><svg><use href="#rect"/></svg></b><b><svg><use href="#circ"/></svg></b><b><svg><use href="#arc"/></svg></b><b><svg><use href="#poly"/></svg></b><b><svg><use href="#anchor"/></svg></b><b><svg><use href="#in"/></svg></b><b><svg><use href="#out"/></svg></b><b><svg><use href="#trash"/></svg></b></aside>
    </div>
    <div class="message"></div>
    <footer class="status"><span class="grow"></span><span class="c66">Z 22.00</span><span class="c172">X 0.250&nbsp; Y 0.250</span><span class="c263">dx 0.250&nbsp; dy 0.250&nbsp; dist 0.354</span><span class="c54">Inches</span><span class="last"></span>
      <svg class="grip" viewBox="0 0 9 9"><path d="M6 0h2v2H6zM3 3h2v2H3zM6 3h2v2H6zM0 6h2v2H0zM3 6h2v2H3zM6 6h2v2H6z" fill="#b5b5b5"/></svg></footer>
  </section>

  <footer class="taskbar">
    <div class="weather"><svg viewBox="0 0 26 24"><circle cx="8" cy="8" r="7" fill="#f59a23"/><path d="M8 22a5.500 5.500 0 0 1 0-11 7.500 7.500 0 0 1 13.500 1.500 5 5 0 0 1-1 9.500z" fill="#b9cfe8"/></svg><p>24°C<br>Mostly cloudy</p></div>
    <div class="apps">
      <a><svg viewBox="0 0 26 26"><path d="M1.500 1.500h11v11h-11zM13.500 1.500h11v11h-11zM1.500 13.500h11v11h-11zM13.500 13.500h11v11h-11z" fill="url(#winblue)"/></svg></a>
      <a><svg viewBox="0 0 26 26"><circle cx="12" cy="11" r="9" fill="#4b4747" stroke="#d6d6d6" stroke-width="2.300"/><path d="M18.500 18l5 6" stroke="#d6d6d6" stroke-width="2.600" stroke-linecap="round"/></svg></a>
      <a class="run"><svg viewBox="0 0 26 26"><path d="M1 1h9l2 3v6H1z" fill="#dc9a0b"/><path d="M1 7l10-1 2-3h12v22H1z" fill="url(#folder)"/><path d="M5 25v-6q0-2 2-2h12q2 0 2 2v6z" fill="#1579c8"/><path d="M9 21h8" stroke="#0b5797" stroke-width="1.500"/></svg></a>
      <a><svg viewBox="0 0 26 26"><rect x="1" y="4" width="24" height="18" rx="4" fill="#f00"/><path d="M10.500 9.500v7l6-3.500z" fill="#fff"/></svg></a>
      <a><svg viewBox="0 0 26 26"><use href="#brave"/><circle cx="19" cy="6" r="6" fill="#1c6fae"/><path d="M15 8q4-1 8-6M17 3q3 2 5 6" stroke="#8cc8ee" fill="none"/></svg></a>
      <a class="run"><svg viewBox="0 0 26 26"><use href="#brave"/><g transform="rotate(28 20 4)"><ellipse cx="20" cy="4" rx="6.500" ry="10" fill="#fff" stroke="#2289c0" stroke-width="1.500"/><path d="M18 -4v16M22 -4v16" stroke="#1d4f94" stroke-width="1.800"/></g></svg></a>
      <a class="run"><svg viewBox="0 0 26 26"><circle cx="13" cy="13" r="12" fill="#1ed760"/><path d="M5 9q9-3 16 2M6 13q8-2 13 2M7 17q6-2 11 1.500" fill="none" stroke="#161616" stroke-width="2.200" stroke-linecap="round"/></svg></a>
      <a><svg viewBox="0 0 26 26"><circle cx="15" cy="5" r="3.800" fill="#7b83eb"/><circle cx="22" cy="6" r="2.700" fill="#5059c9"/><path d="M18 10h8v7q0 5-5 5z" fill="#5059c9"/><path d="M9 10h12v9q-1 6-6 6t-6-6z" fill="#7b83eb"/><rect y="7" width="13" height="13" rx="1.500" fill="#4b53bc"/><text x="6.500" y="17.500" class="logo">T</text></svg></a>
      <a><svg viewBox="0 0 26 26"><circle cx="13" cy="13" r="12.500" fill="#fcc934"/><path d="M13 13L2.200 6.800A12.500 12.500 0 0 1 23.800 6.800z" fill="#ea4335"/><path d="M2.200 6.800A12.500 12.500 0 0 0 12.500 25.500L18.400 16 13 13 7.600 16z" fill="#34a853"/><circle cx="13" cy="13" r="6.200" fill="#fff"/><circle cx="13" cy="13" r="4.900" fill="#2b7de9"/></svg></a>
      <a class="run"><svg viewBox="0 0 26 26"><path d="M18.500 0L25 3v20l-6.500 3L6 14.500 2.500 17 1 16l3.500-3L1 10l1.500-1L6 11.500z" fill="#1a94dc"/><path d="M18.500 7.500L10.500 13l8 5.500z" fill="#23262a"/><path d="M18.500 0L25 3v20l-6.500 3z" fill="#36a9ee"/></svg></a>
      <a class="run"><svg viewBox="0 0 26 26"><circle cx="13" cy="13" r="12" fill="url(#bronze)" stroke="#e2c19a"/><path d="M2 13h7M9 6v14M9 12l9-8M9 14l9 8" stroke="#5d3a1c" stroke-width="1.100" fill="none"/></svg></a>
      <a class="run"><svg viewBox="0 0 26 26"><path d="M7 1h18v24H7z" fill="#185abd"/><path d="M7 1h18v6H7z" fill="#41a5ee"/><path d="M7 7h18v6H7z" fill="#2b7cd3"/><path d="M7 19h18v6H7z" fill="#103f91"/><rect y="6" width="14" height="14" rx="1.500" fill="#185abd"/><text x="7" y="17" class="logo">W</text></svg></a>
      <a class="run active"><svg viewBox="0 0 26 26"><use href="#app"/></svg></a>
    </div>
    <div class="tray">
      <svg class="chev" viewBox="0 0 12 8"><path d="M1.500 6.500L6 2l4.500 4.500" fill="none" stroke="#fff" stroke-width="1.500"/></svg>
      <p class="lang">ENG<br>IN</p>
      <svg class="icons" viewBox="0 0 66 18"><g fill="none" stroke="#fff" stroke-width="1.400"><path d="M1 7q7.500-6.500 15 0M3.500 9.500q5-4 10 0M6 12q2.500-2 5 0"/><path d="M25 7h3l4-4v12l-4-4h-3zM34.500 6q2 3 0 6"/><path d="M37 4q3.500 5 0 10M39.500 2.500q4 6.500 0 13" stroke="#777" stroke-width="1"/><rect x="49" y="4" width="13" height="10" rx="2"/></g><circle cx="8.500" cy="14" r="1.500" fill="#fff"/><path d="M63 7h1.500v4H63zM49 16l4.500-8 4.500 8z" fill="#fff"/><path d="M53.500 10.500v3M53.500 14.200v1" stroke="#222"/></svg>
      <p class="clock">1:43 AM<br>7/4/2025</p>
    </div>
  </footer>
</main>
<script src="plot.js"></script>
</body>
</html>
```

FILE: styles.css
```css
* { box-sizing: border-box; }
body { margin: 0; width: 1920px; height: 1080px; overflow: hidden; background: #fff; font: 12px/16px "Open Sans", "Noto Sans", sans-serif; color: #000; }
p { margin: 0; }
.defs { position: absolute; }
.symbols { display: none; }
.desktop { width: 1920px; height: 1080px; display: flex; flex-direction: column; position: relative; }
.window { height: 1032px; display: flex; flex-direction: column; background: #f0f0f0; }
.title { display: flex; align-items: center; font-size: 12px; letter-spacing: -0.34px; }
.window .title { height: 23px; padding: 1px 5px 0 2px; background: #f3f3f3; color: #888; }
.appicon { width: 17px; height: 17px; margin-right: 5px; }
.caption { width: 120px; height: 20px; margin: -3px 0 0 auto; }
.menu { height: 18px; display: flex; align-items: center; background: #fff; padding: 2px 7px 0; letter-spacing: -0.5px; margin-bottom: 2px; flex: none; }
.menu.dim { color: #666; }
.w32 { width: 32px; } .w34 { width: 34px; } .w39 { width: 39px; } .w42 { width: 42px; } .w75 { width: 75px; } .w41 { width: 41px; }
.toolbar { height: 37px; flex: none; display: flex; align-items: center; padding-left: 5px; background: linear-gradient(#ececec, #c6c6c6); border-top: 1px solid #fff; }
.toolbar > svg { width: 26px; height: 26px; margin: 0 4px; flex: none; overflow: visible; }
.toolbar > i { width: 1px; height: 27px; margin: 0 4px; background: #a6a6a6; flex: none; }
.off { opacity: .42; }
.work { display: flex; flex: 1; min-height: 0; }
.side { background: linear-gradient(#ededed, #c5c5c5); margin-top: 2px; padding-top: 5px; flex: none; }
.side b { display: flex; width: 32px; height: 32px; margin-bottom: 2px; align-items: center; justify-content: center; }
.side b.on { background: #b3d6f3; border: 1px solid #0078d7; }
.side svg { width: 26px; height: 26px; overflow: visible; }
.left { width: 37px; padding-left: 3px; }
.right { width: 37px; padding-left: 2px; }
.canvas { flex: 1; border: 2px solid #a0a0a0; background: #fff; box-shadow: inset 0 0 0 1px #696969; padding: 1px; min-width: 0; }
.sheet { display: block; background: none; }
.message { flex: none; border: 1px solid #a0a0a0; background: #f0f0f0; }
.window .message { height: 32px; margin-right: 1px; }
.status { display: flex; align-items: center; letter-spacing: -0.36px; flex: none; border-top: 1px solid #dadada; }
.window .status { height: 23px; padding: 1px 179px 0 0; border-bottom: 1px solid #777; }
.window .status span { line-height: 22px; }
.status span { height: 20px; line-height: 20px; border-left: 1px solid #d4d4d4; padding-left: 4px; white-space: nowrap; flex: none; }
.status .grow { flex: 1; border-left: 0; padding-left: 2px; }
.status .c66 { width: 66px; } .status .c172 { width: 172px; } .status .c263 { width: 263px; } .status .c54 { width: 54px; }
.status .last { width: 1px; padding: 0; }

.dialog { position: absolute; left: 190px; top: 122px; width: 1185px; height: 754px; display: flex; flex-direction: column; background: #f0f0f0; border-radius: 8px; overflow: hidden; box-shadow: 0 0 0 1px #a8a8a8, 0 20px 42px rgba(0,0,0,.36), 0 2px 22px rgba(0,0,0,.14); }
.dialog .title { height: 31px; padding: 0 4px 0 7px; background: linear-gradient(90deg, #faf2e2, #f9f1e6 35%, #edf3f5 75%, #eaf4f7); }
.dialog .caption { margin-top: 0; }
.dialog .menu { padding-left: 7px; }
.scrolls { display: grid; grid-template: 589px 16px / 1089px 17px; }
.vbar { background: #f0f0f0; display: flex; align-items: center; justify-content: center; margin-right: 1px; }
.vbar u { width: 2px; height: 20px; background: #858585; }
.hbar { grid-column: 1 / 3; background: #f0f0f0; margin: 0 1px 0 0; padding: 7px 0 0 519px; }
.hbar u { display: block; width: 49px; height: 2px; background: #858585; }
.dialog .message { height: 32px; margin-right: 1px; }
.dialog .status { height: 24px; padding-right: 179px; position: relative; }
.grip { position: absolute; right: 0; bottom: 2px; width: 9px; height: 9px; }
.combo { width: 120px; height: 23px; background: #f8f8f8; border: 1px solid #e0e0e0; margin-right: 2px; display: flex; align-items: center; color: #777; padding: 0 4px; letter-spacing: -0.3px; flex: none; }
.combo svg { width: 9px; height: 6px; margin-left: auto; }
.combo + i { margin-left: 4px !important; }

.g { font-family: "Noto Sans", sans-serif; fill: #111; }
.gb { font-family: "Open Sans", sans-serif; font-weight: 700; fill: #2a2a2a; }
.gm { font-family: "Open Sans", sans-serif; font-weight: 600; fill: #444; }
.serifb { font: bold 11px "DejaVu Serif", serif; fill: #fff; }
.tee { font: bold 27px "DejaVu Serif", serif; fill: #2b2b2b; }
.logo { font: bold 11px "Open Sans", sans-serif; fill: #fff; text-anchor: middle; }
.grey { filter: grayscale(1); opacity: .7; }
.plot text { font: 8.5px "DejaVu Sans", sans-serif; fill: #840000; text-anchor: middle; }
.block text { font: 8.5px "DejaVu Sans", sans-serif; fill: #840000; }
.block .big { font-size: 12px; font-weight: 700; }
.pen { font-family: "Inter", sans-serif; font-weight: 100; font-feature-settings: "cv09"; stroke-linejoin: round; stroke-linecap: round; }
.slab { font-family: "Noto Sans CJK JP", sans-serif; }
.teal { fill: #008484; stroke: #008484; }
.maroon { fill: #840000; stroke: #840000; }

.taskbar { height: 48px; display: flex; align-items: center; padding-top: 1px; position: relative; color: #fff; background: linear-gradient(90deg, #1c2a20 0, #1e231f 14%, #1d2820 23%, #20262a 36%, #2f2422 45%, #35251a 50%, #30281c 53%, #1f2528 61%, #24221e 68%, #1f2222 78%, #23241f 88%, #2c231b 96%, #30251c 100%); }
.weather { display: flex; align-items: center; width: 674px; padding-left: 17px; flex: none; letter-spacing: -0.12px; }
.weather svg { width: 26px; height: 24px; margin-right: 7px; }
.apps { display: flex; }
.apps a { width: 44px; height: 47px; display: flex; align-items: center; justify-content: center; position: relative; }
.apps svg { width: 25px; height: 25px; overflow: visible; }
.run::after { content: ""; position: absolute; bottom: 5px; left: 19px; width: 6px; height: 3px; border-radius: 2px; background: #9a9a9a; }
.active::before { content: ""; position: absolute; left: 3px; top: 3px; width: 36px; height: 40px; border-radius: 5px; background: rgba(255,255,255,.09); box-shadow: 3px 0 0 -1px rgba(255,255,255,.1); }
.active svg { position: relative; }
.active::after { left: 14px; width: 16px; background: #4cc2ff; }
.tray { margin-left: auto; display: flex; align-items: center; padding-right: 19px; letter-spacing: -0.1px; }
.chev { width: 12px; height: 8px; margin-right: 20px; }
.lang { text-align: center; width: 26px; margin-right: 14px; }
.icons { width: 66px; height: 18px; margin-right: 12px; }
.tray .clock { text-align: right; width: 52px; white-space: nowrap; }
```

FILE: plot.js
```js
// Plotter lettering: stretch each character so its inked area fills its box.
const ctx = document.createElement('canvas').getContext('2d');
const SIZE = 150;
const PEN = 10;
for (const t of document.querySelectorAll('.pen text')) {
  const [x0, y0, x1, y1] = t.dataset.box.split(' ').map(Number);
  const slab = t.classList.contains('slab');
  ctx.font = '100 ' + SIZE + 'px ' + (slab ? '"Noto Sans CJK JP"' : 'Inter');
  const m = ctx.measureText(t.textContent);
  const w = m.actualBoundingBoxLeft + m.actualBoundingBoxRight;
  const h = m.actualBoundingBoxAscent + m.actualBoundingBoxDescent;
  const flat = y1 - y0 < 20;
  let pen = slab ? 7 : PEN;
  let sx = (x1 - x0 - pen) / w;
  let sy = (y1 - y0 - pen) / h;
  if (flat) {
    // A bar keeps its proportions; the pen supplies the rest of its thickness.
    sy = sx = (x1 - x0 - pen) / w;
    pen = y1 - y0 - h * sy;
  }
  const tx = x0 + pen / 2 + m.actualBoundingBoxLeft * sx;
  const ty = y0 + pen / 2 + m.actualBoundingBoxAscent * sy;
  t.setAttribute('font-size', SIZE);
  t.setAttribute('transform', `translate(${tx} ${ty}) scale(${sx} ${sy})`);
  t.setAttribute('stroke-width', pen / Math.sqrt(sx * sy));
}
```
